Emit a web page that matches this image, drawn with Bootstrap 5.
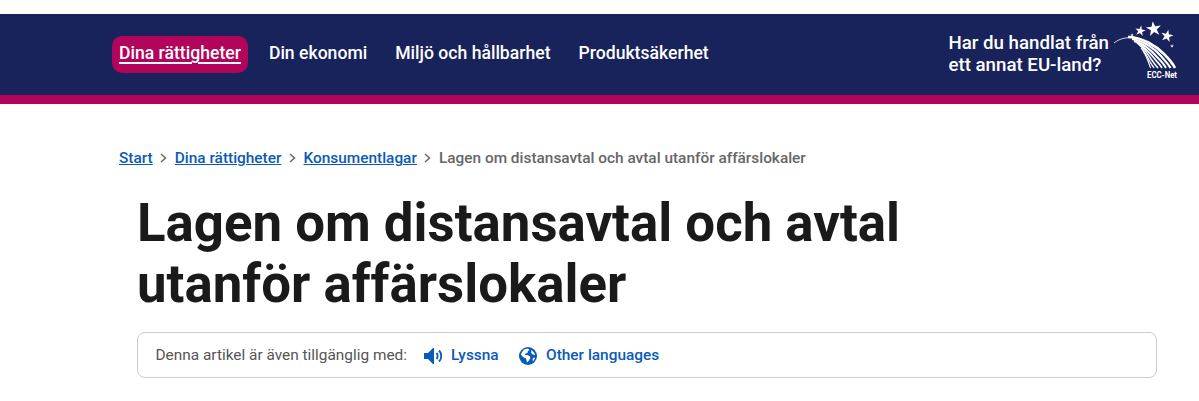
<!DOCTYPE html>
<html lang="sv">
<head>
<meta charset="UTF-8">
<title>Lagen om distansavtal och avtal utanför affärslokaler</title>
<link href="https://cdn.jsdelivr.net/npm/bootstrap@5.3.2/dist/css/bootstrap.min.css" rel="stylesheet">
<style>
body { font-family: Roboto, sans-serif; background: #fff; color: #1a1a1a; overflow: hidden; }
.top-strip { height: 14px; background: #fff; }
.site-head { height: 90px; background: #18235c; border-bottom: 9px solid #b2045a; padding: 0 13px 3px 112px; }
.main-nav { margin-top: 3px; }
.main-link { color: #fff; font-size: 17.6px; font-weight: 500; line-height: 20px; padding: 7px 7px 10px; border-radius: 10px; text-decoration: none; margin-right: 14px; }
.main-link.current { background: #b2045a; text-decoration: underline; text-underline-offset: 3px; text-decoration-thickness: 2px; }
.other-land { color: #fff; font-size: 18.7px; font-weight: 500; line-height: 22px; text-decoration: none; padding-top: 2px; margin-right: 3px; }
.crumbs { padding: 45px 0 0 119px; font-size: 15.4px; font-weight: 500; line-height: 18px; }
.crumbs a { color: #0b5ab8; }
.crumbs .here { color: #666; }
.crumbs svg { margin: 0 8px 0 7.1px; }
.page-title { font-size: 52.8px; font-weight: 700; line-height: 61px; color: #1a1a1a; margin: 26px 0 0 137px; width: 800px; }
.listen-box { margin: 17px 42px 0 137px; height: 46px; border: 1px solid #ccc; border-radius: 8px; padding: 2px 0 0 17.5px; font-size: 15.4px; color: #555; }
.listen-box a { color: #0b5ab8; font-weight: 500; text-decoration: none; }
.listen-label { margin-right: 17px; }
.listen-link { margin-right: 20.5px; gap: 9px; }
</style>
</head>
<body>
<div class="top-strip"></div>
<header class="site-head d-flex align-items-center justify-content-between">
  <nav class="main-nav d-flex align-items-center">
    <a class="main-link current" href="#">Dina rättigheter</a>
    <a class="main-link" href="#">Din ekonomi</a>
    <a class="main-link" href="#">Miljö och hållbarhet</a>
    <a class="main-link" href="#">Produktsäkerhet</a>
  </nav>
  <div class="d-flex align-items-center">
    <a class="other-land" href="#">Har du handlat från<br>ett annat EU-land?</a>
    <svg width="74" height="62" viewBox="0 0 74 62" fill="none" stroke="#fff">
      <defs><polygon id="st" points="0,-1 .225,-.309 .951,-.309 .363,.118 .588,.809 0,.382 -.588,.809 -.363,.118 -.951,-.309 -.225,-.309"/></defs>
      <path d="M2 21C8 16 16 15 23 16" stroke-width=".8"/>
      <path d="M16 15C30 15 44 24 52 32C58 38 61 42 63 46" stroke-width="2.600"/>
      <path d="M20 17C32 19 43 27 49 34C54 40 57 43 58.500 46" stroke-width="2.200"/>
      <path d="M22 19C32 22 40 29 45 35C50 40 52.500 43 54 46" stroke-width="2"/>
      <path d="M25 21C32 25 38 31 42 36C46 41 48.500 43 50 46" stroke-width="1.700"/>
      <path d="M27 23C33 27 36 32 39 37C42 41 44 44 46 46" stroke-width="1.500"/>
      <path d="M29 26C33 30 35 34 37 38C39 42 41 44 42 46" stroke-width="1.300"/>
      <path d="M31 29C33 32 35 36 36 39C37 42 38 44 38.500 46" stroke-width="1.100"/>
      <g fill="#fff" stroke="none">
        <use href="#st" transform="translate(41.700 7) scale(8) rotate(-8)"/>
        <use href="#st" transform="translate(28.300 9) scale(5.500) rotate(10)"/>
        <use href="#st" transform="translate(55 14) scale(6.500) rotate(12)"/>
        <use href="#st" transform="translate(20 13) scale(1.800)"/>
        <use href="#st" transform="translate(60 24) scale(2)"/>
        <text x="35" y="55.500" font-size="9" font-weight="700" font-family="Roboto, sans-serif" textLength="30" lengthAdjust="spacingAndGlyphs">ECC-Net</text>
      </g>
    </svg>
  </div>
</header>
<div class="crumbs d-flex align-items-center">
  <a href="#">Start</a><svg width="7" height="10" viewBox="0 0 7 10" fill="none" stroke="#666" stroke-width="1.500"><path d="M1 1l4.500 4L1 9"/></svg>
  <a href="#">Dina rättigheter</a><svg width="7" height="10" viewBox="0 0 7 10" fill="none" stroke="#666" stroke-width="1.500"><path d="M1 1l4.500 4L1 9"/></svg>
  <a href="#">Konsumentlagar</a><svg width="7" height="10" viewBox="0 0 7 10" fill="none" stroke="#666" stroke-width="1.500"><path d="M1 1l4.500 4L1 9"/></svg>
  <span class="here">Lagen om distansavtal och avtal utanför affärslokaler</span>
</div>
<h1 class="page-title">Lagen om distansavtal och avtal utanför affärslokaler</h1>
<div class="listen-box d-flex align-items-center">
  <span class="listen-label">Denna artikel är även tillgänglig med:</span>
  <a class="listen-link d-flex align-items-center" href="#">
    <svg width="18" height="16" viewBox="0 0 18 16" fill="#0b5ab8"><path d="M0 5h4l5-5h1v16H9l-5-5H0z"/><path d="M12.500 5c1.500 1.500 1.500 4.500 0 6M15 2.500c3 3 3 8 0 11" fill="none" stroke="#0b5ab8" stroke-width="1.800"/></svg>
    Lyssna</a>
  <a class="listen-link d-flex align-items-center" href="#">
    <svg width="18" height="18" viewBox="0 0 18 18"><circle cx="9" cy="9" r="9" fill="#0b5ab8"/><path d="M5 2.500l4-1 1.500 1.500-1.500 1-.5 2-2 .5-.5 1.500L8 8l2.500 1 1 2-2 3-1.500 1.500-1-4L4 10 1.800 7.500 3 5zM12.500 3l3 3 .5 2-2.500-.5-1.500-2zM14.500 10.500l1.700.5-2.200 3.500-.5-2z" fill="#fff"/></svg>
    Other languages</a>
</div>
</body>
</html>
